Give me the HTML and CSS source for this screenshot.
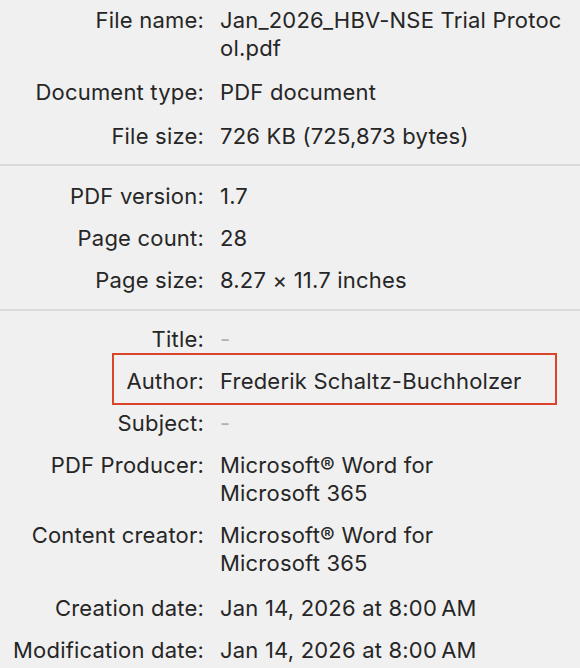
FILE: index.html
```
<!DOCTYPE html>
<html lang="en">
<head>
<meta charset="utf-8">
<link rel="stylesheet" href="styles.css">
</head>
<body>
<div class="panel">
  <section class="group first">
    <div class="row"><span class="label">File name:</span><span class="value">Jan_2026_HBV-NSE Trial Protoc<br>ol.pdf</span></div>
    <div class="row"><span class="label">Document type:</span><span class="value">PDF document</span></div>
    <div class="row"><span class="label">File size:</span><span class="value">726 KB (725,873 bytes)</span></div>
  </section>
  <section class="group second">
    <div class="row"><span class="label">PDF version:</span><span class="value">1.7</span></div>
    <div class="row"><span class="label">Page count:</span><span class="value">28</span></div>
    <div class="row"><span class="label">Page size:</span><span class="value">8.27 × 11.7 inches</span></div>
  </section>
  <section class="group third">
    <div class="row"><span class="label">Title:</span><span class="value empty">-</span></div>
    <div class="row highlight"><span class="label">Author:</span><span class="value">Frederik Schaltz-Buchholzer</span></div>
    <div class="row"><span class="label">Subject:</span><span class="value empty">-</span></div>
    <div class="row"><span class="label">PDF Producer:</span><span class="value">Microsoft® Word for<br>Microsoft 365</span></div>
    <div class="row"><span class="label">Content creator:</span><span class="value">Microsoft® Word for<br>Microsoft 365</span></div>
    <div class="row dates"><span class="label">Creation date:</span><span class="value">Jan 14, 2026 at 8:00&#8239;AM</span></div>
    <div class="row"><span class="label">Modification date:</span><span class="value">Jan 14, 2026 at 8:00&#8239;AM</span></div>
  </section>
</div>
</body>
</html>
```
FILE: styles.css
```
html, body {
  margin: 0;
  padding: 0;
  background: #f0f0f0;
}
body {
  font-family: Inter, "Liberation Sans", sans-serif;
  font-size: 22px;
  letter-spacing: 0.2px;
  color: #262626;
  overflow: hidden;
}
.panel {
  padding-top: 6px;
}
.group {
  display: flex;
  flex-direction: column;
  gap: 14px;
  border-top: 2px solid #dadada;
}
.group.first {
  border-top: none;
  gap: 16px;
  padding-bottom: 14px;
}
.group.second {
  padding: 16px 0 15px;
}
.group.third {
  padding-top: 14px;
}
.row {
  display: grid;
  grid-template-columns: 204px 1fr;
  column-gap: 16px;
  line-height: 28px;
  position: relative;
}
.row.dates {
  margin-top: 3px;
}
.label {
  text-align: right;
}
.empty {
  color: #b0b0b0;
}
.highlight::after {
  content: "";
  position: absolute;
  left: 112px;
  top: -14px;
  width: 441px;
  height: 48px;
  border: 2px solid #d9442a;
}
```
